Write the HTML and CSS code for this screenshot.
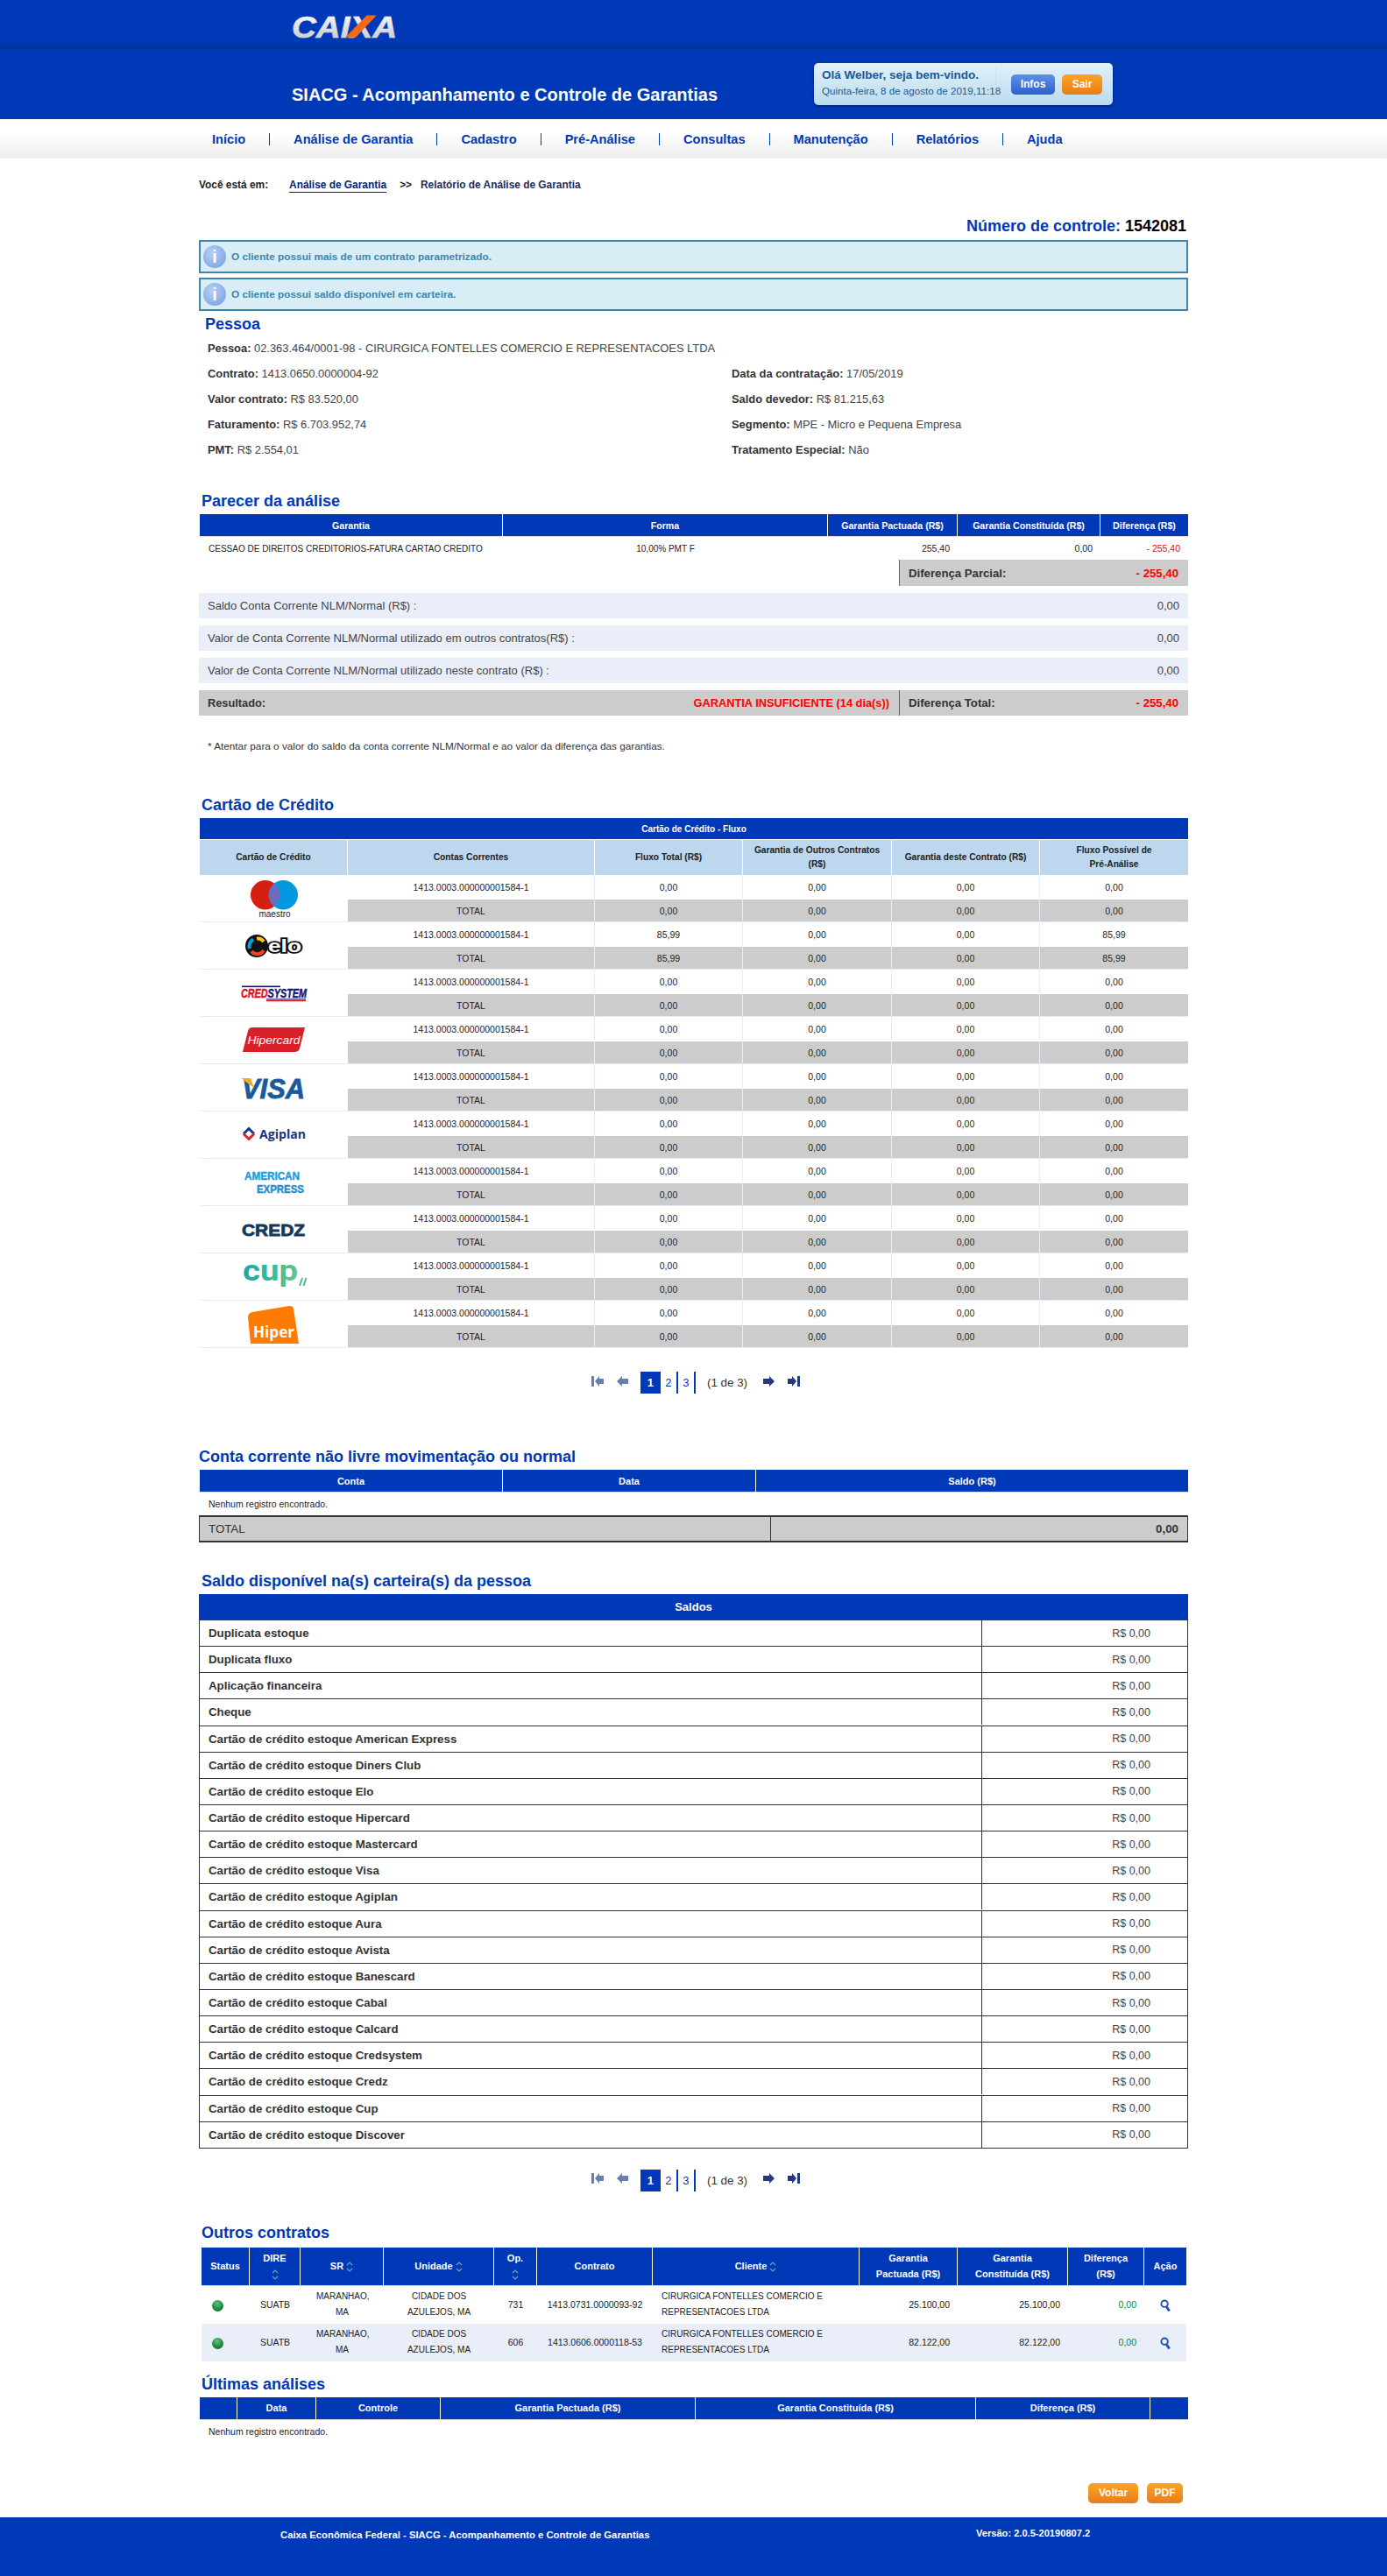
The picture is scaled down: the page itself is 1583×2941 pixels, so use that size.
FILE: index.html

```html
<!DOCTYPE html>
<html lang="pt-BR">
<head>
  <meta charset="UTF-8">
  <title>SIACG - Relatório de Análise de Garantia</title>
  <link rel="stylesheet" href="styles.css">
</head>
<body>
  <header>
    <div class="top-band">
      <svg class="caixa-logo" viewBox="0 -10 120 44" width="120" height="44">
        <defs>
          <linearGradient id="caixaFill" x1="0" y1="0" x2="0" y2="1">
            <stop offset="0" stop-color="#ffffff"/>
            <stop offset="1" stop-color="#c4c6ca"/>
          </linearGradient>
        </defs>
        <text x="0" y="25.5" font-family="Liberation Sans" font-weight="bold" font-style="italic" font-size="35" textLength="120" lengthAdjust="spacingAndGlyphs" fill="url(#caixaFill)" stroke="url(#caixaFill)" stroke-width=".7">CAIXA</text>
        <polygon points="85.6,0.6 96.6,0.6 73.3,25.6 61.3,25.6" fill="#f26a12"/>
      </svg>
    </div>
    <div class="title-band">
      <h1>SIACG - Acompanhamento e Controle de Garantias</h1>
      <div class="user-box">
        <div class="user-text">
          <strong>Olá Welber, seja bem-vindo.</strong>
          <span>Quinta-feira, 8 de agosto de 2019,11:18</span>
        </div>
        <a class="btn btn-blue btn-infos">Infos</a>
        <a class="btn btn-orange btn-sair">Sair</a>
      </div>
    </div>
    <nav class="menu">
      <a>Início</a>
      <a>Análise de Garantia</a>
      <a>Cadastro</a>
      <a>Pré-Análise</a>
      <a>Consultas</a>
      <a>Manutenção</a>
      <a>Relatórios</a>
      <a class="last">Ajuda</a>
    </nav>
  </header>

  <main class="content">
    <div class="crumb">
      <span class="crumb-label">Você está em:</span>
      <a>Análise de Garantia</a>
      <span class="crumb-sep">&gt;&gt;</span>
      <span class="crumb-current">Relatório de Análise de Garantia</span>
    </div>

    <div class="control">Número de controle: <b>1542081</b></div>

    <div class="alert">
      <span class="alert-icon">i</span>
      O cliente possui mais de um contrato parametrizado.
    </div>
    <div class="alert">
      <span class="alert-icon">i</span>
      O cliente possui saldo disponível em carteira.
    </div>

    <h2 class="h-pessoa">Pessoa</h2>
    <div class="fields">
      <div class="wide"><b>Pessoa:</b> 02.363.464/0001-98 - CIRURGICA FONTELLES COMERCIO E REPRESENTACOES LTDA</div>
      <div><b>Contrato:</b> 1413.0650.0000004-92</div>
      <div><b>Data da contratação:</b> 17/05/2019</div>
      <div><b>Valor contrato:</b> R$ 83.520,00</div>
      <div><b>Saldo devedor:</b> R$ 81.215,63</div>
      <div><b>Faturamento:</b> R$ 6.703.952,74</div>
      <div><b>Segmento:</b> MPE - Micro e Pequena Empresa</div>
      <div><b>PMT:</b> R$ 2.554,01</div>
      <div><b>Tratamento Especial:</b> Não</div>
    </div>

    <h2 class="h-parecer">Parecer da análise</h2>
    <table class="grid parecer">
      <colgroup><col class="p1"><col class="p2"><col class="p3"><col class="p4"><col class="p5"></colgroup>
      <thead>
        <tr><th>Garantia</th><th>Forma</th><th>Garantia Pactuada (R$)</th><th>Garantia Constituída (R$)</th><th>Diferença (R$)</th></tr>
      </thead>
      <tbody>
        <tr class="row26">
          <td class="left">CESSAO DE DIREITOS CREDITORIOS-FATURA CARTAO CREDITO</td>
          <td>10,00% PMT F</td>
          <td class="right">255,40</td>
          <td class="right">0,00</td>
          <td class="right red">- 255,40</td>
        </tr>
      </tbody>
    </table>
    <div class="partial">
      <div class="diff-box"><b>Diferença Parcial:</b><b class="red">- 255,40</b></div>
    </div>
    <div class="balance"><span>Saldo Conta Corrente NLM/Normal (R$) :</span><span>0,00</span></div>
    <div class="balance"><span>Valor de Conta Corrente NLM/Normal utilizado em outros contratos(R$) :</span><span>0,00</span></div>
    <div class="balance"><span>Valor de Conta Corrente NLM/Normal utilizado neste contrato (R$) :</span><span>0,00</span></div>
    <div class="result">
      <div class="result-left"><b>Resultado:</b><b class="red">GARANTIA INSUFICIENTE (14 dia(s))</b></div>
      <div class="diff-box"><b>Diferença Total:</b><b class="red">- 255,40</b></div>
    </div>
    <p class="note">* Atentar para o valor do saldo da conta corrente NLM/Normal e ao valor da diferença das garantias.</p>

    <h2 class="h-cartao">Cartão de Crédito</h2>
    <table class="grid cards">
      <colgroup><col class="k1"><col class="k2"><col class="k3"><col class="k4"><col class="k5"><col class="k6"></colgroup>
      <thead>
        <tr class="cards-title"><th colspan="6">Cartão de Crédito - Fluxo</th></tr>
        <tr class="cards-head">
          <th>Cartão de Crédito</th><th>Contas Correntes</th><th>Fluxo Total (R$)</th><th>Garantia de Outros Contratos<br>(R$)</th><th>Garantia deste Contrato (R$)</th><th>Fluxo Possível de<br>Pré-Análise</th>
        </tr>
      </thead>
      <tbody>
        <tr>
          <td class="logo" rowspan="2">
            <svg viewBox="0 0 169 53" width="169" height="53">
              <circle cx="74.7" cy="22.7" r="16.7" fill="#d32011"/>
              <circle cx="95.3" cy="22.7" r="16.7" fill="#0099df"/>
              <path d="M85 9.6A16.7 16.7 0 0 1 85 35.8A16.7 16.7 0 0 1 85 9.6Z" fill="#6c6bbd"/>
              <text x="85.5" y="48" text-anchor="middle" font-family="Liberation Sans" font-size="10" fill="#222">maestro</text>
            </svg>
          </td>
          <td>1413.0003.000000001584-1</td><td>0,00</td><td>0,00</td><td>0,00</td><td>0,00</td>
        </tr>
        <tr class="total"><td>TOTAL</td><td>0,00</td><td>0,00</td><td>0,00</td><td>0,00</td></tr>
        <tr>
          <td class="logo" rowspan="2">
            <svg viewBox="0 0 169 53" width="169" height="53">
              <circle cx="65" cy="27" r="13" fill="#111"/>
              <path d="M65 18.5A8.5 8.5 0 0 1 73 22" fill="none" stroke="#ffcb05" stroke-width="4"/>
              <path d="M57 30A8.5 8.5 0 0 1 61 19.5" fill="none" stroke="#00a4e0" stroke-width="4"/>
              <path d="M73 32A8.5 8.5 0 0 1 59 33" fill="none" stroke="#ef4123" stroke-width="4"/>
              <text x="78" y="33.5" font-family="Liberation Sans" font-weight="bold" font-size="20" textLength="38" lengthAdjust="spacingAndGlyphs" fill="#fff" stroke="#111" stroke-width="3.5" paint-order="stroke">elo</text>
            </svg>
          </td>
          <td>1413.0003.000000001584-1</td><td>85,99</td><td>0,00</td><td>0,00</td><td>85,99</td>
        </tr>
        <tr class="total"><td>TOTAL</td><td>85,99</td><td>0,00</td><td>0,00</td><td>85,99</td></tr>
        <tr>
          <td class="logo" rowspan="2">
            <svg viewBox="0 0 169 53" width="169" height="53">
              <rect x="48" y="18.5" width="44" height="1.6" fill="#14147a"/>
              <text x="47" y="32" font-family="Liberation Sans" font-weight="bold" font-style="italic" font-size="15" textLength="75" lengthAdjust="spacingAndGlyphs" stroke-width=".5"><tspan fill="#e3101c" stroke="#e3101c">CRED</tspan><tspan fill="#14147a" stroke="#14147a">SYSTEM</tspan></text>
              <rect x="76" y="33.3" width="45" height="1" fill="#14147a"/>
              <rect x="76" y="34.6" width="45" height="1.6" fill="#e3101c"/>
            </svg>
          </td>
          <td>1413.0003.000000001584-1</td><td>0,00</td><td>0,00</td><td>0,00</td><td>0,00</td>
        </tr>
        <tr class="total"><td>TOTAL</td><td>0,00</td><td>0,00</td><td>0,00</td><td>0,00</td></tr>
        <tr>
          <td class="logo" rowspan="2">
            <svg viewBox="0 0 169 53" width="169" height="53">
              <path d="M60 12H120L114 36Q113 40 108 40H49L55 16Q56 12 60 12Z" fill="#d81f2a"/>
              <text x="84.5" y="31" text-anchor="middle" font-family="Liberation Sans" font-style="italic" font-size="13.5" textLength="60" lengthAdjust="spacingAndGlyphs" fill="#fff">Hipercard</text>
            </svg>
          </td>
          <td>1413.0003.000000001584-1</td><td>0,00</td><td>0,00</td><td>0,00</td><td>0,00</td>
        </tr>
        <tr class="total"><td>TOTAL</td><td>0,00</td><td>0,00</td><td>0,00</td><td>0,00</td></tr>
        <tr>
          <td class="logo" rowspan="2">
            <svg viewBox="0 0 169 53" width="169" height="53">
              <text x="48" y="39" font-family="Liberation Sans" font-weight="bold" font-style="italic" font-size="32" textLength="72" lengthAdjust="spacingAndGlyphs" fill="#1a5a9a" stroke="#1a5a9a" stroke-width=".8">VISA</text>
              <polygon points="47,16 58,16 62,27" fill="#f7a823"/>
            </svg>
          </td>
          <td>1413.0003.000000001584-1</td><td>0,00</td><td>0,00</td><td>0,00</td><td>0,00</td>
        </tr>
        <tr class="total"><td>TOTAL</td><td>0,00</td><td>0,00</td><td>0,00</td><td>0,00</td></tr>
        <tr>
          <td class="logo" rowspan="2">
            <svg viewBox="0 0 169 53" width="169" height="53">
              <path d="M50 25.5L56 19.5L62 25.5" fill="none" stroke="#123a8a" stroke-width="3"/>
              <path d="M50 25.5L56 31.5L62 25.5" fill="none" stroke="#e3202a" stroke-width="3"/>
              <text x="68" y="31" font-family="Open Sans" font-weight="bold" font-size="15" textLength="53" lengthAdjust="spacingAndGlyphs" fill="#17367a">Agiplan</text>
            </svg>
          </td>
          <td>1413.0003.000000001584-1</td><td>0,00</td><td>0,00</td><td>0,00</td><td>0,00</td>
        </tr>
        <tr class="total"><td>TOTAL</td><td>0,00</td><td>0,00</td><td>0,00</td><td>0,00</td></tr>
        <tr>
          <td class="logo" rowspan="2">
            <svg viewBox="0 0 169 53" width="169" height="53">
              <text x="51" y="24" font-family="Liberation Sans" font-weight="bold" font-size="12.5" textLength="63" lengthAdjust="spacingAndGlyphs" fill="#1a9ad6" stroke="#1a9ad6" stroke-width=".4">AMERICAN</text>
              <text x="65" y="38.7" font-family="Liberation Sans" font-weight="bold" font-size="12.5" textLength="54" lengthAdjust="spacingAndGlyphs" fill="#1a8cc8" stroke="#1a8cc8" stroke-width=".4">EXPRESS</text>
            </svg>
          </td>
          <td>1413.0003.000000001584-1</td><td>0,00</td><td>0,00</td><td>0,00</td><td>0,00</td>
        </tr>
        <tr class="total"><td>TOTAL</td><td>0,00</td><td>0,00</td><td>0,00</td><td>0,00</td></tr>
        <tr>
          <td class="logo" rowspan="2">
            <svg viewBox="0 0 169 53" width="169" height="53">
              <text x="48" y="34" font-family="Liberation Sans" font-weight="bold" font-size="19" textLength="72" lengthAdjust="spacingAndGlyphs" fill="#15385a" stroke="#15385a" stroke-width=".8">CREDZ</text>
            </svg>
          </td>
          <td>1413.0003.000000001584-1</td><td>0,00</td><td>0,00</td><td>0,00</td><td>0,00</td>
        </tr>
        <tr class="total"><td>TOTAL</td><td>0,00</td><td>0,00</td><td>0,00</td><td>0,00</td></tr>
        <tr>
          <td class="logo" rowspan="2">
            <svg viewBox="0 0 169 53" width="169" height="53">
              <defs>
                <linearGradient id="cupFill" x1="0" y1="0" x2="1" y2="0">
                  <stop offset="0" stop-color="#12a8a8"/>
                  <stop offset="1" stop-color="#66c58a"/>
                </linearGradient>
              </defs>
              <text x="49" y="31" font-family="Roboto" font-weight="bold" font-size="34" textLength="63" lengthAdjust="spacingAndGlyphs" fill="url(#cupFill)">cup</text>
              <path d="M114 37L117 28M118.500 37L121.500 28" stroke="#4fbf92" stroke-width="2"/>
            </svg>
          </td>
          <td>1413.0003.000000001584-1</td><td>0,00</td><td>0,00</td><td>0,00</td><td>0,00</td>
        </tr>
        <tr class="total"><td>TOTAL</td><td>0,00</td><td>0,00</td><td>0,00</td><td>0,00</td></tr>
        <tr>
          <td class="logo" rowspan="2">
            <svg viewBox="0 0 169 53" width="169" height="53">
              <path d="M60 13L102 6Q106 5.500 107 9L113 49H58L55 19Q55 14 60 13Z" fill="#ff7a00"/>
              <text x="84.500" y="42" text-anchor="middle" font-family="Open Sans" font-weight="bold" font-size="18" textLength="47" lengthAdjust="spacingAndGlyphs" fill="#fff">Hiper</text>
            </svg>
          </td>
          <td>1413.0003.000000001584-1</td><td>0,00</td><td>0,00</td><td>0,00</td><td>0,00</td>
        </tr>
        <tr class="total"><td>TOTAL</td><td>0,00</td><td>0,00</td><td>0,00</td><td>0,00</td></tr>
      </tbody>
    </table>

    <div class="pager pager-cards">
      <svg class="arrow off first" viewBox="0 0 16 14"><path d="M1 1h3v12H1zM5 7l5-6v3h5v6h-5v3z"/></svg>
      <svg class="arrow off prev" viewBox="0 0 13 12"><path d="M0 6l6-6v3h7v6H6v3z"/></svg>
      <a class="page current">1</a>
      <a class="page">2</a>
      <a class="page">3</a>
      <span class="page-info">(1 de 3)</span>
      <svg class="arrow next" viewBox="0 0 13 12"><path d="M13 6L7 0v3H0v6h7v3z"/></svg>
      <svg class="arrow last" viewBox="0 0 16 14"><path d="M15 1h-3v12h3zM11 7L6 1v3H1v6h5v3z"/></svg>
    </div>

    <h2 class="h-conta">Conta corrente não livre movimentação ou normal</h2>
    <table class="grid">
      <colgroup><col class="n1"><col class="n2"><col class="n3"></colgroup>
      <thead><tr><th>Conta</th><th>Data</th><th>Saldo (R$)</th></tr></thead>
      <tbody><tr class="row26"><td class="left" colspan="3">Nenhum registro encontrado.</td></tr></tbody>
    </table>
    <div class="total-box"><span>TOTAL</span><b>0,00</b></div>

    <h2 class="h-saldo">Saldo disponível na(s) carteira(s) da pessoa</h2>
    <div class="wallet">
      <div class="wallet-head">Saldos</div>
      <div class="wallet-row"><b>Duplicata estoque</b><span>R$ 0,00</span></div>
      <div class="wallet-row"><b>Duplicata fluxo</b><span>R$ 0,00</span></div>
      <div class="wallet-row"><b>Aplicação financeira</b><span>R$ 0,00</span></div>
      <div class="wallet-row"><b>Cheque</b><span>R$ 0,00</span></div>
      <div class="wallet-row"><b>Cartão de crédito estoque American Express</b><span>R$ 0,00</span></div>
      <div class="wallet-row"><b>Cartão de crédito estoque Diners Club</b><span>R$ 0,00</span></div>
      <div class="wallet-row"><b>Cartão de crédito estoque Elo</b><span>R$ 0,00</span></div>
      <div class="wallet-row"><b>Cartão de crédito estoque Hipercard</b><span>R$ 0,00</span></div>
      <div class="wallet-row"><b>Cartão de crédito estoque Mastercard</b><span>R$ 0,00</span></div>
      <div class="wallet-row"><b>Cartão de crédito estoque Visa</b><span>R$ 0,00</span></div>
      <div class="wallet-row"><b>Cartão de crédito estoque Agiplan</b><span>R$ 0,00</span></div>
      <div class="wallet-row"><b>Cartão de crédito estoque Aura</b><span>R$ 0,00</span></div>
      <div class="wallet-row"><b>Cartão de crédito estoque Avista</b><span>R$ 0,00</span></div>
      <div class="wallet-row"><b>Cartão de crédito estoque Banescard</b><span>R$ 0,00</span></div>
      <div class="wallet-row"><b>Cartão de crédito estoque Cabal</b><span>R$ 0,00</span></div>
      <div class="wallet-row"><b>Cartão de crédito estoque Calcard</b><span>R$ 0,00</span></div>
      <div class="wallet-row"><b>Cartão de crédito estoque Credsystem</b><span>R$ 0,00</span></div>
      <div class="wallet-row"><b>Cartão de crédito estoque Credz</b><span>R$ 0,00</span></div>
      <div class="wallet-row"><b>Cartão de crédito estoque Cup</b><span>R$ 0,00</span></div>
      <div class="wallet-row"><b>Cartão de crédito estoque Discover</b><span>R$ 0,00</span></div>
    </div>

    <div class="pager pager-wallet">
      <svg class="arrow off first" viewBox="0 0 16 14"><path d="M1 1h3v12H1zM5 7l5-6v3h5v6h-5v3z"/></svg>
      <svg class="arrow off prev" viewBox="0 0 13 12"><path d="M0 6l6-6v3h7v6H6v3z"/></svg>
      <a class="page current">1</a>
      <a class="page">2</a>
      <a class="page">3</a>
      <span class="page-info">(1 de 3)</span>
      <svg class="arrow next" viewBox="0 0 13 12"><path d="M13 6L7 0v3H0v6h7v3z"/></svg>
      <svg class="arrow last" viewBox="0 0 16 14"><path d="M15 1h-3v12h3zM11 7L6 1v3H1v6h5v3z"/></svg>
    </div>

    <h2 class="h-outros">Outros contratos</h2>
    <table class="grid others">
      <colgroup><col class="o1"><col class="o2"><col class="o3"><col class="o4"><col class="o5"><col class="o6"><col class="o7"><col class="o8"><col class="o9"><col class="o10"><col class="o11"></colgroup>
      <thead>
        <tr>
          <th>Status</th>
          <th>DIRE<br><svg class="sort" viewBox="0 0 8 14"><path d="M1 5l3-3 3 3M1 9l3 3 3-3"/></svg></th>
          <th>SR <svg class="sort" viewBox="0 0 8 14"><path d="M1 5l3-3 3 3M1 9l3 3 3-3"/></svg></th>
          <th>Unidade <svg class="sort" viewBox="0 0 8 14"><path d="M1 5l3-3 3 3M1 9l3 3 3-3"/></svg></th>
          <th>Op.<br><svg class="sort" viewBox="0 0 8 14"><path d="M1 5l3-3 3 3M1 9l3 3 3-3"/></svg></th>
          <th>Contrato</th>
          <th>Cliente <svg class="sort" viewBox="0 0 8 14"><path d="M1 5l3-3 3 3M1 9l3 3 3-3"/></svg></th>
          <th>Garantia<br>Pactuada (R$)</th>
          <th>Garantia<br>Constituída (R$)</th>
          <th>Diferença<br>(R$)</th>
          <th>Ação</th>
        </tr>
      </thead>
      <tbody>
        <tr>
          <td class="status"><span class="dot"></span></td>
          <td>SUATB</td>
          <td class="caps sr">MARANHAO, MA</td>
          <td class="caps unit">CIDADE DOS AZULEJOS, MA</td>
          <td>731</td>
          <td>1413.0731.0000093-92</td>
          <td class="left caps">CIRURGICA FONTELLES COMERCIO E REPRESENTACOES LTDA</td>
          <td class="right">25.100,00</td>
          <td class="right">25.100,00</td>
          <td class="right green">0,00</td>
          <td>
            <svg class="lens" viewBox="0 0 14 16"><circle cx="5.500" cy="5.500" r="4" fill="none" stroke="#1f4fb5" stroke-width="2"/><path d="M8 9.500l3.500 5" stroke="#1f4fb5" stroke-width="3"/></svg>
          </td>
        </tr>
        <tr class="alt">
          <td class="status"><span class="dot"></span></td>
          <td>SUATB</td>
          <td class="caps sr">MARANHAO, MA</td>
          <td class="caps unit">CIDADE DOS AZULEJOS, MA</td>
          <td>606</td>
          <td>1413.0606.0000118-53</td>
          <td class="left caps">CIRURGICA FONTELLES COMERCIO E REPRESENTACOES LTDA</td>
          <td class="right">82.122,00</td>
          <td class="right">82.122,00</td>
          <td class="right green">0,00</td>
          <td>
            <svg class="lens" viewBox="0 0 14 16"><circle cx="5.500" cy="5.500" r="4" fill="none" stroke="#1f4fb5" stroke-width="2"/><path d="M8 9.500l3.500 5" stroke="#1f4fb5" stroke-width="3"/></svg>
          </td>
        </tr>
      </tbody>
    </table>

    <h2 class="h-ultimas">Últimas análises</h2>
    <table class="grid">
      <colgroup><col class="u1"><col class="u2"><col class="u3"><col class="u4"><col class="u5"><col class="u6"><col class="u7"></colgroup>
      <thead><tr><th></th><th>Data</th><th>Controle</th><th>Garantia Pactuada (R$)</th><th>Garantia Constituída (R$)</th><th>Diferença (R$)</th><th></th></tr></thead>
      <tbody><tr class="row26"><td class="left" colspan="7">Nenhum registro encontrado.</td></tr></tbody>
    </table>

    <div class="actions">
      <a class="btn btn-orange btn-voltar">Voltar</a>
      <a class="btn btn-orange btn-pdf">PDF</a>
    </div>
  </main>

  <footer>
    <span class="footer-name">Caixa Econômica Federal - SIACG - Acompanhamento e Controle de Garantias</span>
    <span class="footer-version">Versão: 2.0.5-20190807.2</span>
  </footer>
</body>
</html>
```

FILE: styles.css

```css
* {
  box-sizing: border-box;
}

body {
  margin: 0;
  font-family: 'Liberation Sans', Arial, sans-serif;
  font-size: 12px;
  color: #333;
  background: #fff;
}

h1, h2, p {
  margin: 0;
}

.red {
  color: #f00;
}

.green {
  color: #0a8a1e;
}

/* header */
.top-band {
  height: 57px;
  padding: 7px 0 0 333px;
  background: linear-gradient(to bottom, #0039b8 80%, #00329f 100%);
}

.caixa-logo {
  display: block;
}

.title-band {
  display: flex;
  height: 79px;
  padding-left: 333px;
  background: #0039b8;
}

.title-band h1 {
  width: 596px;
  padding-top: 39px;
  font-size: 20px;
  line-height: 24px;
  color: #fff;
}

.user-box {
  display: flex;
  align-items: center;
  width: 341px;
  height: 48px;
  margin-top: 15px;
  padding-left: 9px;
  border-radius: 5px;
  background: linear-gradient(to bottom, #e2f0f9, #bbdcee);
  box-shadow: 0 1px 3px rgba(0, 0, 40, 0.6);
}

.user-text {
  display: flex;
  flex-direction: column;
  gap: 3px;
  width: 199px;
  height: 36px;
  border-right: 1px solid #c9e0ee;
  color: #1a5a94;
  white-space: nowrap;
}

.user-text strong {
  font-size: 13.5px;
  line-height: 16px;
}

.user-text span {
  font-size: 11.6px;
  line-height: 14px;
}

.btn {
  display: flex;
  align-items: center;
  justify-content: center;
  height: 23px;
  border-radius: 5px;
  font-size: 12px;
  font-weight: bold;
  color: #fff;
}

.btn-blue {
  background: linear-gradient(to bottom, #5f90ea, #2c5fcb);
}

.btn-orange {
  background: linear-gradient(to bottom, #fba523, #e87c18);
}

.btn-infos {
  width: 50px;
  margin-left: 17px;
}

.btn-sair {
  width: 46px;
  margin-left: 8px;
}

.menu {
  display: flex;
  align-items: center;
  height: 45px;
  padding-left: 215px;
  background: linear-gradient(to bottom, #fff 35%, #eee 100%);
}

.menu a {
  padding: 0 27px;
  border-right: 1px solid #0039b8;
  font-size: 14.6px;
  font-weight: bold;
  line-height: 14px;
  color: #0039b8;
}

.menu a.last {
  border-right: 0;
}

/* page */
.content {
  width: 1129px;
  margin: 0 auto;
}

.crumb {
  display: flex;
  margin-top: 22px;
  font-size: 11.9px;
  font-weight: bold;
  line-height: 16px;
  color: #222;
}

.crumb a {
  margin-left: 24px;
  border-bottom: 1px solid #00247a;
  color: #00247a;
}

.crumb-sep {
  margin-left: 15px;
}

.crumb-current {
  margin-left: 10px;
  color: #1c2d5a;
}

.control {
  margin-top: 27px;
  padding-right: 2px;
  font-size: 18px;
  font-weight: bold;
  line-height: 22px;
  text-align: right;
  color: #0039b8;
}

.control b {
  color: #000;
}

.alert {
  display: flex;
  align-items: center;
  gap: 6px;
  height: 38px;
  margin-top: 5px;
  padding-left: 3px;
  border: 2px solid #3a87ad;
  background: #d9edf7;
  font-size: 11.8px;
  font-weight: bold;
  color: #3a87ad;
}

.alert-icon {
  width: 26px;
  height: 26px;
  border-radius: 50%;
  background: radial-gradient(circle at 40% 35%, #b8cff5, #6f9be4);
  font-size: 20px;
  line-height: 26px;
  text-align: center;
  color: #fff;
}

h2 {
  font-size: 18px;
  line-height: 22px;
  margin-bottom: 4px;
  color: #0039b8;
}

.h-pessoa {
  margin-top: 4px;
  margin-bottom: 2px;
  padding-left: 7px;
}

.fields {
  display: grid;
  grid-template-columns: 598px 1fr;
  grid-auto-rows: 29px;
  align-items: center;
  padding-left: 10px;
  font-size: 12.9px;
  color: #444;
}

.fields b {
  color: #333;
}

.fields .wide {
  grid-column: 1 / 3;
}

.h-parecer {
  margin-top: 33px;
  padding-left: 3px;
}

/* tables */
.grid {
  width: 1128px;
  margin-left: 1px;
  border-collapse: separate;
  border-spacing: 0;
  table-layout: fixed;
  font-size: 10.5px;
  color: #222;
}

.grid th {
  height: 26px;
  padding: 0;
  border-right: 1px solid #fff;
  border-bottom: 1px solid #ddd;
  background: #0039b8;
  font-size: 11px;
  color: #fff;
}

.grid th:last-child {
  border-right: 0;
}

.grid td {
  padding: 0;
  text-align: center;
}

.grid td.left {
  padding-left: 10px;
  text-align: left;
}

.grid td.right {
  padding-right: 9px;
  text-align: right;
}

.grid td.red {
  color: #f00;
}

.grid td.green {
  color: #0a8a1e;
}

.row26 td {
  height: 26px;
}

.parecer th {
  font-size: 10.6px;
}

.parecer td {
  font-size: 10px;
}

.parecer td.right {
  font-size: 10.5px;
}

.p1 { width: 346px; }
.p2 { width: 371px; }
.p3 { width: 148px; }
.p4 { width: 163px; }
.p5 { width: 100px; }

.partial {
  display: flex;
  justify-content: flex-end;
}

.diff-box {
  display: flex;
  align-items: center;
  justify-content: space-between;
  width: 330px;
  height: 30px;
  padding: 0 11px 0 10px;
  border-left: 1px solid #666;
  background: #ccc;
  font-size: 13.2px;
}

.balance {
  display: flex;
  align-items: center;
  justify-content: space-between;
  height: 29px;
  margin-top: 8px;
  padding: 0 10px;
  background: #eaeef9;
  font-size: 13px;
  color: #444;
}

.result {
  display: flex;
  height: 29px;
  margin-top: 8px;
  background: #ccc;
}

.result .diff-box {
  height: 29px;
}

.result-left {
  display: flex;
  align-items: center;
  justify-content: space-between;
  width: 799px;
  padding: 0 11px 0 10px;
  font-size: 12.8px;
}

.note {
  margin-top: 28px;
  padding-left: 10px;
  font-size: 11.75px;
  line-height: 14px;
}

.h-cartao {
  margin-top: 49px;
  padding-left: 3px;
}

.k1 { width: 169px; }
.k2 { width: 282px; }
.k3 { width: 169px; }
.k4 { width: 170px; }
.k5 { width: 169px; }
.k6 { width: 169px; }

.cards-title th {
  height: 25px;
  border-bottom: 1px solid #fff;
  font-size: 10px;
}

.cards-head th {
  height: 40px;
  padding: 0 10px;
  border-bottom: 0;
  background: #bdd7ee;
  font-size: 10.2px;
  line-height: 16px;
  color: #222;
}

.cards td {
  height: 28px;
  border-right: 1px solid #e8ecf8;
}

.cards td:last-child {
  border-right: 0;
}

.cards td.logo {
  padding: 0;
  border-right: 0;
  border-bottom: 1px solid #e8ecf8;
  vertical-align: top;
}

.logo svg {
  display: block;
}

.cards .total td {
  height: 26px;
  background: #ccc;
  border-bottom: 1px solid #e8ecf8;
}

/* pager */
.pager {
  display: flex;
  align-items: center;
  justify-content: center;
  height: 25px;
  padding-left: 5px;
  font-size: 13px;
}

.pager-cards {
  margin-top: 27px;
}

.pager-wallet {
  margin-top: 24px;
}

.arrow {
  height: 14px;
  margin-bottom: 4px;
  fill: #26397f;
}

.arrow.off {
  fill: #6a7db0;
}

.arrow.first {
  width: 16px;
}

.arrow.prev {
  width: 13px;
  margin-left: 14px;
}

.arrow.next {
  width: 13px;
  margin-left: 18px;
}

.arrow.last {
  width: 16px;
  margin-left: 14px;
}

.page {
  display: flex;
  align-items: center;
  justify-content: center;
  width: 20px;
  height: 25px;
  border-right: 2px solid #0039b8;
  color: #0039b8;
}

.page.current {
  width: 23px;
  margin-left: 14px;
  border: 0;
  background: #0039b8;
  font-weight: bold;
  color: #fff;
}

.page-info {
  margin-left: 13px;
  font-size: 13.4px;
  color: #333;
}

.h-conta {
  margin-top: 61px;
}

.n1 { width: 346px; }
.n2 { width: 289px; }
.n3 { width: 493px; }

.total-box {
  display: flex;
  align-items: center;
  justify-content: space-between;
  height: 31px;
  padding: 0 10px;
  border: 1px solid #333;
  border-width: 2px 1px;
  background: linear-gradient(to right, #ccc 651px, #333 651px, #333 652px, #ccc 652px);
  font-size: 13.3px;
}

.h-saldo {
  margin-top: 33px;
  padding-left: 3px;
}

.wallet-head {
  height: 30px;
  background: #0039b8;
  font-size: 13px;
  font-weight: bold;
  line-height: 30px;
  text-align: center;
  color: #fff;
}

.wallet-row {
  display: grid;
  grid-template-columns: 893px 1fr;
  align-items: center;
  height: 30.15px;
  border: 1px solid #333;
  border-top: 0;
  font-size: 12.5px;
}

.wallet-row b {
  padding-left: 10px;
  font-size: 13.3px;
  line-height: 29px;
  border-right: 1px solid #333;
}

.wallet-row span {
  padding-right: 42px;
  text-align: right;
  color: #444;
}

.h-outros {
  margin-top: 36px;
  margin-bottom: 6px;
  padding-left: 3px;
}

.others {
  width: 1124px;
  margin-left: 3px;
  line-height: 18px;
}

.others th {
  height: 44px;
  line-height: 18px;
}

.others td {
  height: 43px;
}

.others .alt td {
  background: #e9eef9;
}

.others td.caps {
  font-size: 10px;
}

.others td.sr {
  padding: 0 18px;
}

.others td.unit {
  padding: 0 8px;
}

.others td.left {
  padding-right: 30px;
}

.o1 { width: 55px; }
.o2 { width: 58px; }
.o3 { width: 95px; }
.o4 { width: 126px; }
.o5 { width: 49px; }
.o6 { width: 132px; }
.o7 { width: 236px; }
.o8 { width: 112px; }
.o9 { width: 126px; }
.o10 { width: 87px; }
.o11 { width: 48px; }

.sort {
  width: 8px;
  height: 14px;
  vertical-align: middle;
  fill: none;
  stroke: #6fa3ad;
  stroke-width: 1.2;
}

.grid td.status {
  padding-right: 19px;
}

.dot {
  display: inline-block;
  width: 13px;
  height: 13px;
  border-radius: 50%;
  background: radial-gradient(circle at 45% 30%, #5fc47a, #0e7a33 70%);
  vertical-align: middle;
}

.lens {
  width: 13px;
  height: 15px;
  vertical-align: middle;
}

.h-ultimas {
  margin-top: 15px;
  padding-left: 3px;
}

.u1 { width: 43px; }
.u2 { width: 90px; }
.u3 { width: 142px; }
.u4 { width: 291px; }
.u5 { width: 320px; }
.u6 { width: 199px; }
.u7 { width: 43px; }

.actions {
  display: flex;
  justify-content: flex-end;
  gap: 10px;
  margin-top: 46px;
  padding-right: 6px;
}

.btn-voltar {
  width: 57px;
}

.btn-pdf {
  width: 41px;
}

footer {
  display: flex;
  height: 68px;
  margin-top: 16px;
  padding: 14px 0 0 320px;
  background: #0039b8;
  font-size: 11.3px;
  font-weight: bold;
  color: #fff;
}

.footer-name {
  width: 794px;
}

.footer-version {
  margin-top: -2px;
  font-size: 11.1px;
}
```
